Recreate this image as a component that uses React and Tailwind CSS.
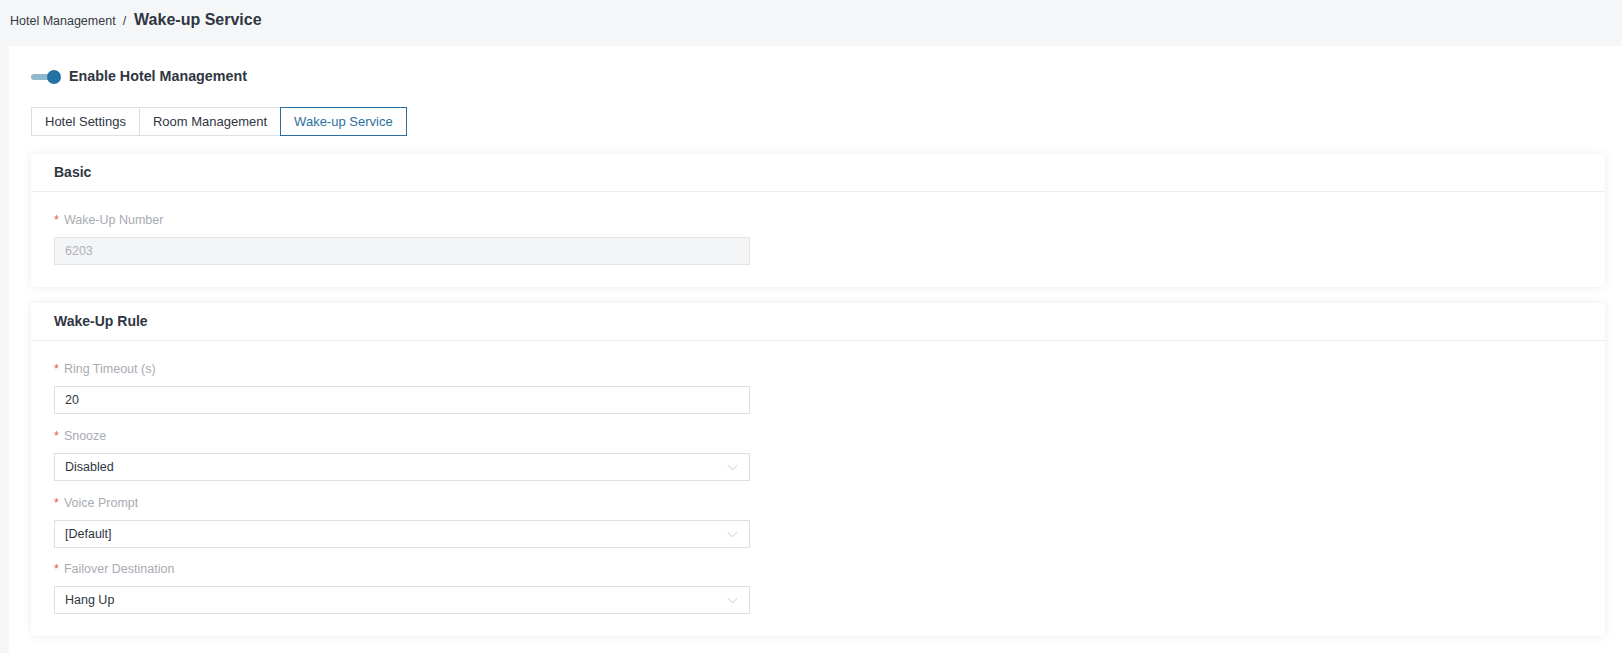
import React from "react";

const FONT = "font-['Liberation_Sans',Arial,Helvetica,sans-serif]";

function Chevron() {
  return (
    <svg width="11" height="7" viewBox="0 0 11 7" fill="none" className="shrink-0">
      <path d="M0.5 0.8 L5.5 5.8 L10.5 0.8" stroke="#c6c9cf" strokeWidth="1" />
    </svg>
  );
}

function Label({ children }) {
  return (
    <div className="flex h-[20px] items-center text-[12.5px] leading-[20px] text-[#a8abb2]">
      <span className="mr-[5px] text-[#f0533d]">*</span>
      <span>{children}</span>
    </div>
  );
}

function TextField({ label, value, disabled, className = "" }) {
  return (
    <div className={className}>
      <Label>{label}</Label>
      <div
        className={
          "mt-[7px] flex h-[28px] w-[696px] items-center border px-[10px] text-[12.5px] " +
          (disabled
            ? "border-[#e2e4e8] bg-[#f4f5f7] text-[#b0b3b9]"
            : "border-[#dcdfe4] bg-white text-[#2f3642]")
        }
      >
        {value}
      </div>
    </div>
  );
}

function SelectField({ label, value, className = "" }) {
  return (
    <div className={className}>
      <Label>{label}</Label>
      <div className="mt-[7px] flex h-[28px] w-[696px] items-center justify-between border border-[#dcdfe4] bg-white pl-[10px] pr-[11px] text-[12.5px] text-[#2f3642]">
        <span>{value}</span>
        <Chevron />
      </div>
    </div>
  );
}

function Card({ title, children, className = "" }) {
  return (
    <div className={"rounded-[2px] bg-white shadow-[0_0_10px_rgba(0,0,0,0.08)] " + className}>
      <div className="flex h-[38px] items-center border-b border-[#ebedf0] px-[23px] text-[14px] font-bold text-[#2f3642]">
        {title}
      </div>
      <div className="px-[23px] pb-[22px] pt-[18px]">{children}</div>
    </div>
  );
}

const tabs = ["Hotel Settings", "Room Management", "Wake-up Service"];

export default function App() {
  const active = 2;
  return (
    <div className={"flex min-h-screen flex-col bg-[#f5f6f8] " + FONT}>
      {/* breadcrumb */}
      <div className="flex h-[46px] items-start px-[10px] pt-[8px]">
        <div className="flex items-baseline">
          <span className="text-[12.5px] text-[#333a45]">Hotel Management</span>
          <span className="ml-[7px] mr-[8px] text-[12.5px] text-[#333a45]">/</span>
          <span className="text-[16px] font-bold text-[#2f3642]">Wake-up Service</span>
        </div>
      </div>

      {/* content panel */}
      <div className="ml-[9px] flex-1 bg-white pl-[22px] pr-[17px] pt-[21px] pb-[17px]">
        {/* enable switch */}
        <div className="flex h-[20px] items-center">
          <div className="relative h-[14px] w-[31px]">
            <div className="absolute left-0 top-[4px] h-[6px] w-[28px] rounded-full bg-[#8fb9cd]" />
            <div className="absolute left-[16px] top-0 h-[14px] w-[14px] rounded-full bg-[#2471a3]" />
          </div>
          <span className="ml-[7px] text-[14.3px] font-bold text-[#2f3642]">Enable Hotel Management</span>
        </div>

        {/* tabs */}
        <div className="mt-[20px] flex">
          {tabs.map((t, i) => (
            <div
              key={t}
              className={
                "relative flex h-[29px] items-center border px-[13px] text-[13px] " +
                (i > 0 ? "-ml-px " : "") +
                (i === active
                  ? "z-10 border-[#2a6fa3] text-[#2c6fa0]"
                  : "border-[#dcdfe6] text-[#2f3642]")
              }
            >
              {t}
            </div>
          ))}
        </div>

        <Card title="Basic" className="mt-[18px]">
          <TextField label="Wake-Up Number" value="6203" disabled />
        </Card>

        <Card title="Wake-Up Rule" className="mt-[16px]">
          <TextField label="Ring Timeout (s)" value="20" className="mb-[12px]" />
          <SelectField label="Snooze" value="Disabled" className="mb-[12px]" />
          <SelectField label="Voice Prompt" value="[Default]" className="mb-[11px]" />
          <SelectField label="Failover Destination" value="Hang Up" />
        </Card>
      </div>
    </div>
  );
}
